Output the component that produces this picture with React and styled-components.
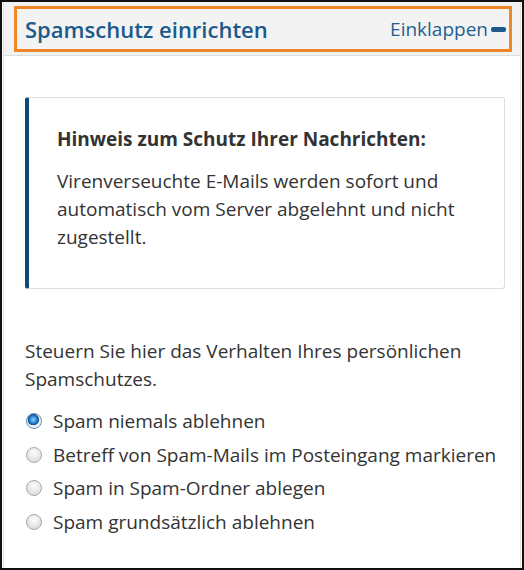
import styled, { createGlobalStyle } from "styled-components";
import { useState } from "react";

const GlobalStyle = createGlobalStyle`
  html, body {
    margin: 0;
    padding: 0;
    background: #fff;
  }
  body {
    font-family: "Open Sans", "Liberation Sans", sans-serif;
    color: #333;
  }
  * {
    box-sizing: border-box;
  }
`;

const options = [
  "Spam niemals ablehnen",
  "Betreff von Spam-Mails im Posteingang markieren",
  "Spam in Spam-Ordner ablegen",
  "Spam grundsätzlich ablehnen",
];

export default function App() {
  const [selected, setSelected] = useState(0);

  return (
    <>
      <GlobalStyle />
      <StyledFrame>
        <StyledPanel>
          <StyledHeader>
            <StyledToggle>
              <StyledTitle>Spamschutz einrichten</StyledTitle>
              <StyledCollapse>
                Einklappen
                <StyledMinus />
              </StyledCollapse>
            </StyledToggle>
          </StyledHeader>
          <StyledContent>
            <StyledNotice>
              <StyledNoticeTitle>Hinweis zum Schutz Ihrer Nachrichten:</StyledNoticeTitle>
              <StyledNoticeText>
                Virenverseuchte E-Mails werden sofort und automatisch vom Server abgelehnt und
                nicht zugestellt.
              </StyledNoticeText>
            </StyledNotice>
            <StyledIntro>
              Steuern Sie hier das Verhalten Ihres persönlichen Spamschutzes.
            </StyledIntro>
            <StyledOptions>
              {options.map((label, index) => (
                <StyledOption key={label}>
                  <StyledRadio
                    type="radio"
                    name="spam"
                    checked={selected === index}
                    onChange={() => setSelected(index)}
                  />
                  {label}
                </StyledOption>
              ))}
            </StyledOptions>
          </StyledContent>
        </StyledPanel>
      </StyledFrame>
    </>
  );
}

const StyledFrame = styled.div`
  width: 524px;
  height: 570px;
  border: 2px solid #111;
  padding: 0 1px 0 1px;
  background: #fff;
`;

const StyledPanel = styled.section`
  height: 100%;
  border-left: 1px solid #e2e2e2;
  border-right: 1px solid #e2e2e2;
`;

const StyledHeader = styled.div`
  background: #f3f3f3;
  padding: 4px 8px 3px 10px;
  border-bottom: 1px solid #dcdcdc;
`;

const StyledToggle = styled.div`
  display: flex;
  align-items: center;
  justify-content: space-between;
  height: 46px;
  border: 3px solid #f0862a;
  padding: 0 3px 0 8px;
`;

const StyledTitle = styled.h2`
  margin: 0;
  font-size: 22px;
  font-weight: 600;
  color: #1b5a8a;
`;

const StyledCollapse = styled.span`
  display: flex;
  align-items: center;
  gap: 3px;
  font-size: 19px;
  color: #245f90;
  cursor: pointer;
`;

const StyledMinus = styled.span`
  display: block;
  width: 15px;
  height: 5px;
  border-radius: 2px;
  background: #1b5a8a;
`;

const StyledContent = styled.div`
  padding: 41px 15px 0 21px;
`;

const StyledNotice = styled.div`
  border: 1px solid #dddddd;
  border-left: 4px solid #0d4b75;
  border-radius: 3px;
  padding: 27px 28px 37px;
`;

const StyledNoticeTitle = styled.h3`
  margin: 0 0 14px;
  font-size: 19px;
  line-height: 28px;
  font-weight: 700;
  color: #333;
`;

const StyledNoticeText = styled.p`
  margin: 0;
  font-size: 19px;
  line-height: 28px;
`;

const StyledIntro = styled.p`
  margin: 48px 0 0;
  font-size: 19px;
  line-height: 28px;
`;

const StyledOptions = styled.div`
  display: flex;
  flex-direction: column;
  margin-top: 11px;
`;

const StyledOption = styled.label`
  display: flex;
  align-items: center;
  gap: 11px;
  height: 33.7px;
  font-size: 19px;
  cursor: pointer;
`;

const StyledRadio = styled.input`
  appearance: none;
  margin: 0 0 0 1px;
  width: 16px;
  height: 16px;
  border-radius: 50%;
  border: 1px solid #a9a9a9;
  background: radial-gradient(circle at 50% 35%, #fdfdfd 0%, #e6e6e6 55%, #cfcfcf 100%);
  flex-shrink: 0;

  &:checked {
    border-color: #6c8fb0;
    background: radial-gradient(circle at 45% 40%, #8fd0ff 0%, #2d86d6 30%, #12508f 48%, #e9eef4 52%, #f4f6f8 100%);
  }
`;
